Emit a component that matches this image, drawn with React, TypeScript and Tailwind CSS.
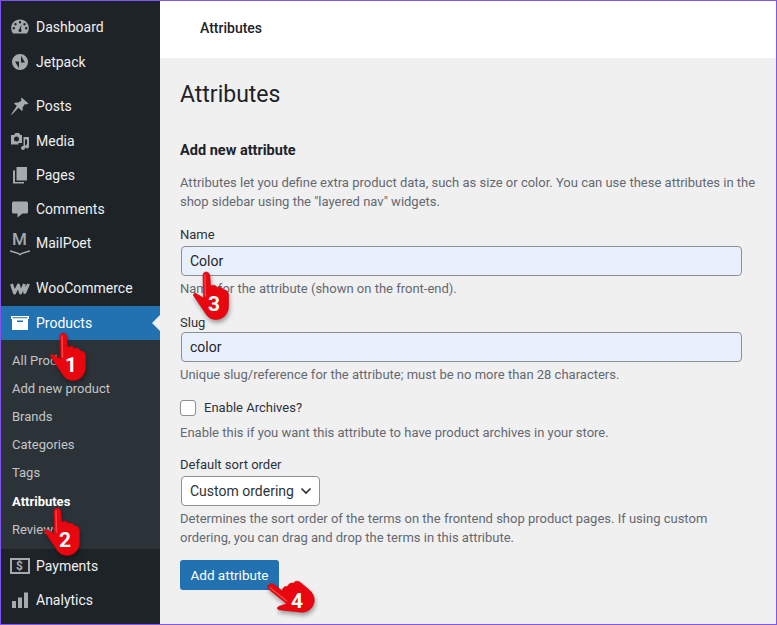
import * as React from "react";

const HAND =
  "M13 0 C15.5 0 17 2 17 5 L17.5 14 C20 12.5 23 13 24 15.5 C26.5 14.5 29.5 15.5 30.5 18 C33 17.5 35.5 19.5 35.5 23 L35.5 34 C35.5 42 30 47.5 23 47.5 C17 47.5 14 44 11 39 L0.5 23.5 C0 22 1.5 21 3 21.5 L10.5 26 L10 4 C10 1.5 11 0 13 0 Z";

/* Red pointing hand from the annotation layer, with its step number on top. */
function Pointer({
  n,
  className,
  angle = 0,
}: {
  n: number;
  className: string;
  angle?: number;
}) {
  return (
    <div className={`absolute h-[48px] w-[36px] ${className}`}>
      <svg
        viewBox="0 0 36 48"
        className="absolute inset-0 h-full w-full overflow-visible drop-shadow-[1px_3px_2px_rgba(0,0,0,0.35)]"
        aria-hidden="true"
      >
        <g transform={`rotate(${angle} 20 30)`}>
          <path d={HAND} fill="#e8060f" stroke="#d0000a" strokeWidth="0.6" />
          <path d="M12 3 L12.5 24" stroke="#ff5a5a" strokeWidth="1.5" strokeLinecap="round" opacity="0.7" />
        </g>
      </svg>
      <span className="absolute left-[14px] top-[20px] w-[14px] text-center text-[21px] font-bold leading-[24px] text-white">
        {n}
      </span>
    </div>
  );
}

const iconClass = "h-5 w-5 fill-[#a7aaad]";

function DashboardIcon() {
  return (
    <svg viewBox="0 0 20 20" className={iconClass}>
      <path
        fillRule="evenodd"
        d="M10 2.5 C4.8 2.5 1.2 6.3 1.2 11 C1.2 13 1.9 14.9 3 16.4 H17 C18.1 14.9 18.8 13 18.8 11 C18.8 6.3 15.2 2.5 10 2.5 Z M10 4 a1.2 1.2 0 1 1 0 2.4 a1.2 1.2 0 0 1 0 -2.4 Z M5.5 6 a1.2 1.2 0 1 1 0 2.4 a1.2 1.2 0 0 1 0 -2.4 Z M14.5 6 a1.2 1.2 0 1 1 0 2.4 a1.2 1.2 0 0 1 0 -2.4 Z M3.8 10 a1.2 1.2 0 1 1 0 2.4 a1.2 1.2 0 0 1 0 -2.4 Z M16.2 10 a1.2 1.2 0 1 1 0 2.4 a1.2 1.2 0 0 1 0 -2.4 Z M11.5 7.5 L10.9 12.2 a1.5 1.5 0 1 1 -1.7 0 Z"
      />
    </svg>
  );
}

function JetpackIcon() {
  return (
    <svg viewBox="0 0 20 20" className={iconClass}>
      <path
        fillRule="evenodd"
        d="M10 2 a8 8 0 1 0 0 16 a8 8 0 0 0 0 -16 Z M11 3.8 V10.5 H15 Z M9 16.2 V9.5 H5 Z"
      />
    </svg>
  );
}

function PinIcon() {
  return (
    <svg viewBox="0 0 20 20" className={iconClass}>
      <path d="M11.5 1.5 L18.5 7.5 L16.5 8.5 L15 8 L12.5 11.5 C13 13 12.8 14 12 15 L8.5 11.8 L2 18.5 L1 18.5 L6.8 10 L4 7.5 C5 6.6 6.5 6.3 8 6.8 L11.5 4.5 L11 2.8 Z" />
    </svg>
  );
}

function MediaIcon() {
  return (
    <svg viewBox="0 0 20 20" className={iconClass}>
      <path
        fillRule="evenodd"
        d="M1 4 H4 L5.5 2 H9 L10.5 4 H12 V12 H8.5 V13.5 H1 Z M6.5 5.5 a2.5 2.5 0 1 0 0 5 a2.5 2.5 0 0 0 0 -5 Z"
      />
      <path d="M13.5 6 H19 V15.5 a2 2 0 1 1 -2 -2 V8.5 H15 V17 a2 2 0 1 1 -2 -2 a2 2 0 0 1 0.5 0 Z" />
    </svg>
  );
}

function PagesIcon() {
  return (
    <svg viewBox="0 0 20 20" className={iconClass}>
      <path d="M6.5 2 H17 V15.5 H6.5 Z" />
      <path d="M3 5.5 H5 V17 H14 V18.5 H3 Z" />
    </svg>
  );
}

function CommentsIcon() {
  return (
    <svg viewBox="0 0 20 20" className={iconClass}>
      <path d="M3.5 2.5 H16.5 A1.5 1.5 0 0 1 18 4 V13 A1.5 1.5 0 0 1 16.5 14.5 H12.5 L7.5 18.5 V14.5 H3.5 A1.5 1.5 0 0 1 2 13 V4 A1.5 1.5 0 0 1 3.5 2.5 Z" />
    </svg>
  );
}

function MailPoetIcon() {
  return (
    <div className="relative flex h-[28px] w-5 justify-center">
      <span className="text-[17px] font-medium leading-[20px] text-[#a7aaad]">M</span>
      <svg viewBox="0 0 20 6" className="absolute bottom-[1px] left-0 h-[6px] w-5" fill="none">
        <path d="M0 1 C4 2.5 8 2.5 10 4.5 C12 2.5 16 2.5 20 1" stroke="#a7aaad" strokeWidth="1.6" />
      </svg>
    </div>
  );
}

function WooIcon() {
  return (
    <svg viewBox="0 0 20 12" className="h-[13px] w-5" fill="none">
      <path
        d="M1.5 1.5 L4.5 10.5 L8.5 2.5 L10.5 10.5 L14.5 1.5 M14 3 L14.8 10 L18.5 1.5"
        stroke="#a7aaad"
        strokeWidth="3"
        strokeLinejoin="round"
      />
    </svg>
  );
}

function ProductsIcon() {
  return (
    <svg viewBox="0 0 20 20" className="h-[20px] w-[20px] fill-white">
      <path
        fillRule="evenodd"
        d="M1 3 H19 V6 H18 V17 H2 V6 H1 Z M2.5 4.2 V5.2 H17.5 V4.2 Z M7 7.5 V9 H13 V7.5 Z"
      />
    </svg>
  );
}

function PaymentsIcon() {
  return (
    <div className="flex h-[16px] w-[20px] items-center justify-center border-2 border-[#a7aaad] text-[12px] font-bold leading-none text-[#a7aaad]">
      $
    </div>
  );
}

function AnalyticsIcon() {
  return (
    <svg viewBox="0 0 20 20" className={iconClass}>
      <path d="M2 11 H6 V18 H2 Z M8 7.5 H12 V18 H8 Z M14 2.5 H18 V18 H14 Z" />
    </svg>
  );
}

function MenuItem({
  icon,
  label,
  active,
}: {
  icon: React.ReactNode;
  label: string;
  active?: boolean;
}) {
  return (
    <div
      className={`relative flex h-[34px] items-center text-[14px] ${
        active ? "bg-[#2271b1] text-white" : "text-[#f0f0f1]"
      }`}
    >
      <div className="flex w-[35px] items-center justify-center pl-[2px]">{icon}</div>
      <span className="pt-px">{label}</span>
      {active && (
        <span className="absolute right-0 top-[9px] h-0 w-0 border-y-[8px] border-r-[8px] border-y-transparent border-r-[#f0f0f1]" />
      )}
    </div>
  );
}

function SubItem({ label, current, low }: { label: string; current?: boolean; low?: boolean }) {
  return (
    <div
      className={`flex h-[28px] items-center pl-[11px] text-[13px] ${low ? "pt-[2px]" : ""} ${
        current ? "font-bold text-white" : "text-[#c3c5c7]"
      }`}
    >
      {label}
    </div>
  );
}

const hint = "text-[13px] leading-[19px] text-[#646970]";
const label = "text-[13px] leading-[19px] text-[#2c3338]";
const input =
  "flex h-[30px] w-[561px] items-center rounded-[4px] border border-[#8c8f94] bg-[#e8f0fe] px-2 text-[14px] text-[#1d2327]";

export default function App() {
  return (
    <div
      className="relative flex h-[625px] w-[777px] overflow-hidden border border-[#7f54f0] bg-[#f0f0f1]"
      style={{ fontFamily: "Roboto, sans-serif" }}
    >
      <aside className="flex w-[159px] flex-none flex-col bg-[#1d2327] pt-[9px]">
        <MenuItem icon={<DashboardIcon />} label="Dashboard" />
        <div className="h-px" />
        <MenuItem icon={<JetpackIcon />} label="Jetpack" />
        <div className="h-[10px]" />
        <MenuItem icon={<PinIcon />} label="Posts" />
        <div className="h-px" />
        <MenuItem icon={<MediaIcon />} label="Media" />
        <MenuItem icon={<PagesIcon />} label="Pages" />
        <MenuItem icon={<CommentsIcon />} label="Comments" />
        <MenuItem icon={<MailPoetIcon />} label="MailPoet" />
        <div className="h-[11px]" />
        <MenuItem icon={<WooIcon />} label="WooCommerce" />
        <div className="h-px" />
        <MenuItem icon={<ProductsIcon />} label="Products" active />
        <div className="bg-[#2c3338] pb-[6px] pt-[7px]">
          <SubItem label="All Products" />
          <SubItem label="Add new product" />
          <SubItem label="Brands" />
          <SubItem label="Categories" />
          <SubItem label="Tags" />
          <SubItem label="Attributes" current low />
          <SubItem label="Reviews" low />
        </div>
        <MenuItem icon={<PaymentsIcon />} label="Payments" />
        <MenuItem icon={<AnalyticsIcon />} label="Analytics" />
      </aside>

      <main className="flex min-w-0 flex-1 flex-col">
        <header className="flex h-[57px] flex-none items-center bg-white pb-[2px] pl-[40px] text-[14px] font-medium text-[#1d2327]">
          Attributes
        </header>
        <div className="flex flex-col items-start pl-[20px]">
          <h1 className="mt-[21px] text-[23px] leading-[32px] text-[#1d2327]">Attributes</h1>
          <h2 className="mt-[30px] text-[14.5px] font-bold leading-[20px] text-[#1d2327]">
            Add new attribute
          </h2>
          <p className={`${hint} mt-[12px] w-[585px]`}>
            Attributes let you define extra product data, such as size or color. You can use these attributes in the
            shop sidebar using the "layered nav" widgets.
          </p>
          <div className={`${label} mt-[14px]`}>Name</div>
          <div className={`${input} ml-px mt-[2px]`}>Color</div>
          <div className={`${hint} mt-[3px]`}>Name for the attribute (shown on the front-end).</div>
          <div className={`${label} mt-[15px]`}>Slug</div>
          <div className={`${input} ml-px`}>color</div>
          <div className={`${hint} mt-[3px]`}>Unique slug/reference for the attribute; must be no more than 28 characters.</div>
          <div className="mt-[14px] flex h-[19px] items-center">
            <span className="h-[16px] w-[16px] rounded-[3px] border border-[#8c8f94] bg-white" />
            <span className="ml-[8px] pt-px text-[13px] text-[#2c3338]">Enable Archives?</span>
          </div>
          <div className={`${hint} mt-[6px]`}>Enable this if you want this attribute to have product archives in your store.</div>
          <div className={`${label} mt-[13px]`}>Default sort order</div>
          <div className="ml-px mt-[2px] flex h-[30px] w-[139px] items-center justify-between rounded-[4px] border border-[#8c8f94] bg-white pl-2 pr-[7px] text-[14px] text-[#2c3338]">
            <span className="whitespace-nowrap">Custom ordering</span>
            <svg viewBox="0 0 12 8" className="h-2 w-3" fill="none">
              <path d="M1.5 1.5 L6 6 L10.5 1.5" stroke="#2c3338" strokeWidth="1.7" />
            </svg>
          </div>
          <p className={`${hint} mt-[3px] w-[570px]`}>
            Determines the sort order of the terms on the frontend shop product pages. If using custom ordering, you
            can drag and drop the terms in this attribute.
          </p>
          <button
            type="button"
            className="mt-[13px] flex h-[30px] w-[99px] items-center justify-center rounded-[3px] bg-[#2271b1] pt-px text-[13.5px] text-white"
          >
            Add attribute
          </button>
        </div>
      </main>

      <Pointer n={1} className="left-[49px] top-[332px]" />
      <Pointer n={2} className="left-[43px] top-[507px]" />
      <Pointer n={3} className="left-[192px] top-[271px]" />
      <Pointer n={4} className="left-[275px] top-[568px]" angle={-50} />
    </div>
  );
}
